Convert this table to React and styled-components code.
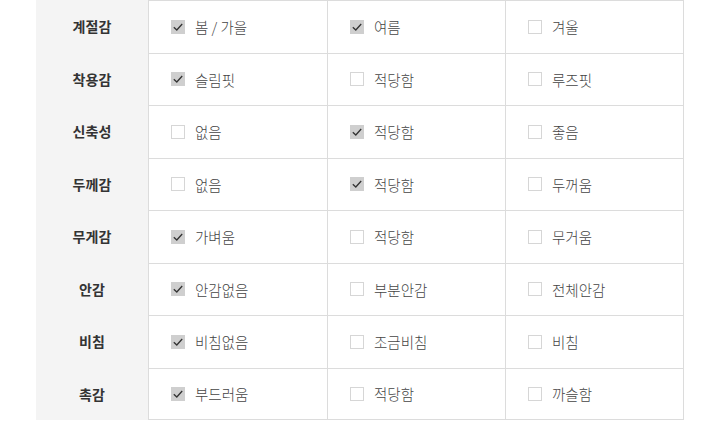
import React from "react";
import styled, { createGlobalStyle } from "styled-components";

const Global = createGlobalStyle`
  html, body { margin: 0; padding: 0; background: #fff; }
  body { font-family: "Noto Sans CJK KR", "Noto Sans", sans-serif; }
`;

const Table = styled.div`
  margin-left: 36px;
  width: 648px;
  display: flex;
  flex-direction: column;
`;

const Row = styled.div`
  display: grid;
  grid-template-columns: 112px 179px 178px 179px;
  height: 52.5px;
`;

const Label = styled.div`
  background: #f4f4f4;
  display: flex;
  align-items: center;
  justify-content: center;
  font-size: 14px;
  font-weight: 700;
  color: #333;
  letter-spacing: 0.2px;
`;

const Cell = styled.div`
  box-sizing: border-box;
  border-left: 1px solid #dcdcdc;
  border-top: 1px solid #dcdcdc;
  ${(p) => (p.$last ? "border-right: 1px solid #dcdcdc;" : "")}
  ${(p) => (p.$bottom ? "border-bottom: 1px solid #dcdcdc;" : "")}
  display: flex;
  align-items: center;
  padding-left: 22px;
  gap: 10px;
  font-size: 14.5px;
  font-weight: 300;
  color: #444;
`;

const Box = styled.span`
  box-sizing: border-box;
  width: 14px;
  height: 14px;
  flex: none;
  display: flex;
  align-items: center;
  justify-content: center;
  background: ${(p) => (p.$checked ? "#cfcfcf" : "#fff")};
  border: 1px solid ${(p) => (p.$checked ? "#cfcfcf" : "#d6d6d6")};
`;

const Check = () => (
  <svg width="12" height="12" viewBox="0 0 12 12">
    <path d="M1.8 6.2 L4.8 9 L10.2 3" fill="none" stroke="#333" strokeWidth="1.3" />
  </svg>
);

const rows = [
  ["계절감", [["봄 / 가을", 1], ["여름", 1], ["겨울", 0]]],
  ["착용감", [["슬림핏", 1], ["적당함", 0], ["루즈핏", 0]]],
  ["신축성", [["없음", 0], ["적당함", 1], ["좋음", 0]]],
  ["두께감", [["없음", 0], ["적당함", 1], ["두꺼움", 0]]],
  ["무게감", [["가벼움", 1], ["적당함", 0], ["무거움", 0]]],
  ["안감", [["안감없음", 1], ["부분안감", 0], ["전체안감", 0]]],
  ["비침", [["비침없음", 1], ["조금비침", 0], ["비침", 0]]],
  ["촉감", [["부드러움", 1], ["적당함", 0], ["까슬함", 0]]],
];

export default function App() {
  return (
    <>
      <Global />
      <Table>
        {rows.map(([label, opts], ri) => (
          <Row key={label}>
            <Label>{label}</Label>
            {opts.map(([text, checked], ci) => (
              <Cell key={ci} $last={ci === 2} $bottom={ri === rows.length - 1}>
                <Box $checked={!!checked}>{checked ? <Check /> : null}</Box>
                {text}
              </Cell>
            ))}
          </Row>
        ))}
      </Table>
    </>
  );
}
